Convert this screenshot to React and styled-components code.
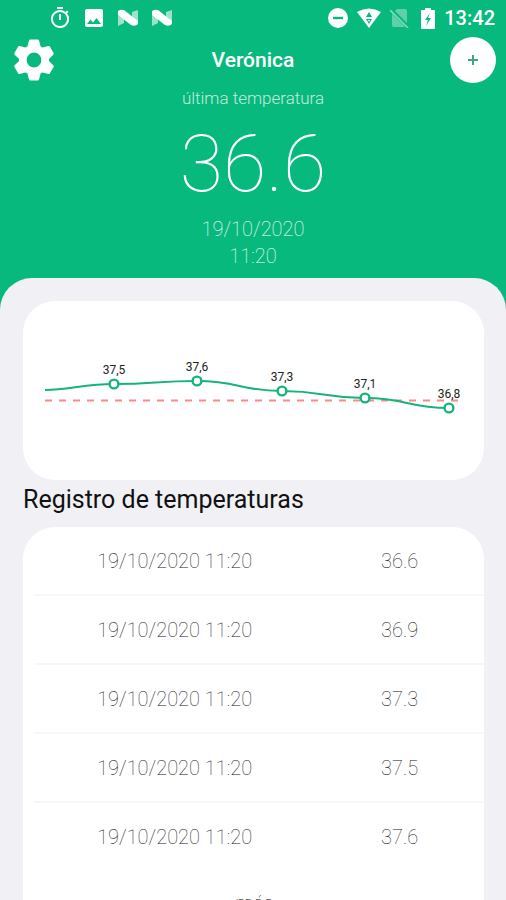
import React from "react";
import styled, { createGlobalStyle } from "styled-components";
import { MdOutlineTimer, MdImage } from "react-icons/md";

const GlobalStyle = createGlobalStyle`
    * {
        box-sizing: border-box;
    }
    body {
        margin: 0;
        background-color: #f0f0f5;
        font-family: Roboto, "Liberation Sans", sans-serif;
    }
`;

const Page = styled.div`
    display: flex;
    flex-direction: column;
    height: 100vh;
    background-color: #08b97e;
`;

const StatusBar = styled.div`
    display: flex;
    justify-content: space-between;
    align-items: center;
    height: 36px;
    padding: 0 11px 0 48px;
    color: white;
`;

const StatusGroup = styled.div`
    display: flex;
    align-items: center;
    gap: ${(props) => props.$gap}px;
`;

const Clock = styled.span`
    font-size: 20px;
    font-weight: 500;
`;

const Toolbar = styled.header`
    display: grid;
    grid-template-columns: 48px 1fr 48px;
    align-items: center;
    height: 48px;
    padding: 0 10px;
    color: white;
`;

const UserName = styled.h1`
    margin: 0;
    font-size: 21px;
    font-weight: 500;
    text-align: center;
`;

const SettingsBtn = styled.button`
    display: flex;
    justify-content: center;
    padding: 0;
    border: none;
    background: none;
    color: white;
`;

const AddBtn = styled.button`
    display: flex;
    justify-content: center;
    align-items: center;
    justify-self: end;
    width: 46px;
    height: 46px;
    padding: 0;
    border: none;
    border-radius: 50%;
    background-color: white;
`;

const LastReading = styled.section`
    padding-bottom: 8px;
    text-align: center;
    color: white;
`;

const Caption = styled.p`
    margin: 0;
    font-size: 17px;
    font-weight: 300;
    line-height: 28px;
    color: rgba(255, 255, 255, 0.75);
`;

const BigTemperature = styled.p`
    margin: 0;
    font-size: 79px;
    font-weight: 100;
    line-height: 104px;
`;

const LastDate = styled.p`
    margin: 0;
    font-size: 20px;
    font-weight: 100;
    line-height: 27px;
    color: white;
`;

const Sheet = styled.main`
    flex: 1;
    min-height: 0;
    padding: 23px 22px 0 23px;
    border-radius: 32px 32px 0 0;
    background-color: #f0f0f5;
    overflow-y: auto;
    scrollbar-width: none;
`;

const Card = styled.div`
    border-radius: 32px;
    background-color: white;
    overflow: hidden;
`;

const ListCard = styled(Card)`
    padding: 0 0 12px 11px;
`;

const ChartSvg = styled.svg`
    display: block;
    width: 100%;
    height: auto;
`;

const ChartLabel = styled.text`
    font-size: 12px;
    text-anchor: middle;
    fill: #222;
`;

const SectionTitle = styled.h2`
    margin: 0;
    padding-bottom: 8px;
    font-size: 25px;
    font-weight: 400;
    line-height: 39px;
    color: #111;
`;

const LogTable = styled.table`
    width: 100%;
    table-layout: fixed;
    border-spacing: 0;
`;

const LogCell = styled.td`
    width: ${(props) => props.$width};
    height: 69px;
    padding: 0;
    border-bottom: 2px solid ${(props) => (props.$last ? "transparent" : "#f7f7f8")};
    font-size: 20px;
    font-weight: 100;
    text-align: center;
    color: #222;
`;

const MoreBtn = styled.button`
    display: block;
    width: 100%;
    height: 62px;
    padding: 0 9px 0 0;
    border: none;
    background: none;
    font-family: inherit;
    font-size: 20px;
    font-weight: 100;
    color: #222;
`;

const points = [
    { x: 91, y: 83, label: "37,5" },
    { x: 174, y: 80, label: "37,6" },
    { x: 259, y: 90, label: "37,3" },
    { x: 342, y: 97, label: "37,1" },
    { x: 426, y: 107, label: "36,8" },
];

const records = [
    { id: 1, date: "19/10/2020 11:20", value: "36.6" },
    { id: 2, date: "19/10/2020 11:20", value: "36.9" },
    { id: 3, date: "19/10/2020 11:20", value: "37.3" },
    { id: 4, date: "19/10/2020 11:20", value: "37.5" },
    { id: 5, date: "19/10/2020 11:20", value: "37.6" },
];

// flat tangents at every reading, so the curve eases in and out
const curvePath = () => {
    let path = "M22 89 C45 89 62 83 91 83";
    for (let i = 1; i < points.length; i++) {
        const prev = points[i - 1];
        const next = points[i];
        const mid = (prev.x + next.x) / 2;
        path += ` C${mid} ${prev.y} ${mid} ${next.y} ${next.x} ${next.y}`;
    }
    return path;
};

function NougatIcon() {
    return (
        <svg width="24" height="18" viewBox="0 0 24 18" fill="white">
            <path d="M2 2 L8 5 V14 L2 17 Z" opacity="0.6" />
            <path d="M16 3 L22 1 V15 L16 12 Z" opacity="0.6" />
            <path d="M2 2 Q5 0 8 1 L22 12 V15 Q19 18 15 16 L2 6 Z" />
        </svg>
    );
}

function DisturbIcon() {
    return (
        <svg width="20" height="20" viewBox="0 0 20 20">
            <circle cx="10" cy="10" r="10" fill="white" />
            <path d="M5 10 H15" stroke="#08b97e" strokeWidth="2.4" />
        </svg>
    );
}

function WifiIcon() {
    return (
        <svg width="24" height="20" viewBox="0 0 24 20">
            <path d="M0 4 Q12 -3 24 4 L12 20 Z" fill="white" />
            <path d="M12 4 L15 9 H9 Z M9 11 H15 L12 16 Z" fill="#08b97e" />
            <path d="M11 12 H13 L12 14 Z" fill="white" />
        </svg>
    );
}

function NoSimIcon() {
    return (
        <svg width="22" height="20" viewBox="0 0 22 20">
            <path d="M7 1 H15 Q17 1 17 3 V19 H4 Q2 19 2 17 V6 Z" fill="white" opacity="0.35" />
            <path d="M1 2 L18 19" stroke="#08b97e" strokeWidth="4" />
            <path d="M0 2 L18 20" stroke="#7fdcbb" strokeWidth="1.6" />
        </svg>
    );
}

function BatteryIcon() {
    return (
        <svg width="14" height="21" viewBox="0 0 14 21">
            <path d="M4 0 H10 V2 H13 Q14 2 14 3 V20 Q14 21 13 21 H1 Q0 21 0 20 V3 Q0 2 1 2 H4 Z" fill="white" />
            <path d="M9 5 L4 12 H7 L5 18 L10 10 H7 Z" fill="#08b97e" />
        </svg>
    );
}

function GearIcon() {
    return (
        <svg width="42" height="42" viewBox="-21 -21 42 42">
            <mask id="gearHole">
                <rect x="-21" y="-21" width="42" height="42" fill="white" />
                <circle r="7.4" fill="black" />
            </mask>
            <g fill="currentColor" mask="url(#gearHole)">
                <circle r="15" />
                {[0, 60, 120, 180, 240, 300].map((angle) => (
                    <path
                        key={angle}
                        d="M-7 -12 L-5 -19.4 Q-4.8 -20.4 -3.8 -20.4 H3.8 Q4.8 -20.4 5 -19.4 L7 -12 Z"
                        transform={`rotate(${angle})`}
                    />
                ))}
            </g>
        </svg>
    );
}

function Chart() {
    return (
        <ChartSvg viewBox="0 0 461 179" role="img" aria-label="Temperaturas">
            <path d="M22 99.5 H438" stroke="#fb8a84" strokeWidth="2" strokeDasharray="7 7" />
            <path d={curvePath()} fill="none" stroke="#16b37c" strokeWidth="2" />
            {points.map((point) => (
                <g key={point.label}>
                    <circle cx={point.x} cy={point.y} r="4.4" fill="white" stroke="#16b37c" strokeWidth="2.4" />
                    <ChartLabel x={point.x} y={point.y - 10}>{point.label}</ChartLabel>
                </g>
            ))}
        </ChartSvg>
    );
}

function App() {
    return (
        <Page>
            <GlobalStyle />
            <StatusBar>
                <StatusGroup $gap={10}>
                    <MdOutlineTimer size={24} />
                    <MdImage size={24} />
                    <NougatIcon />
                    <NougatIcon />
                </StatusGroup>
                <StatusGroup $gap={9}>
                    <DisturbIcon />
                    <WifiIcon />
                    <NoSimIcon />
                    <BatteryIcon />
                    <Clock>13:42</Clock>
                </StatusGroup>
            </StatusBar>
            <Toolbar>
                <SettingsBtn aria-label="Ajustes">
                    <GearIcon />
                </SettingsBtn>
                <UserName>Verónica</UserName>
                <AddBtn aria-label="Añadir">
                    <svg width="12" height="12" viewBox="0 0 12 12" stroke="#3fa780" strokeWidth="2">
                        <path d="M6 1 V11 M1 6 H11" />
                    </svg>
                </AddBtn>
            </Toolbar>
            <LastReading>
                <Caption>última temperatura</Caption>
                <BigTemperature>36.6</BigTemperature>
                <LastDate>
                    19/10/2020
                    <br />
                    11:20
                </LastDate>
            </LastReading>
            <Sheet>
                <Card>
                    <Chart />
                </Card>
                <SectionTitle>Registro de temperaturas</SectionTitle>
                <ListCard>
                    <LogTable>
                        <tbody>
                            {records.map((record, index) => (
                                <tr key={record.id}>
                                    <LogCell $width="62.5%" $last={index === records.length - 1}>{record.date}</LogCell>
                                    <LogCell $width="37.5%" $last={index === records.length - 1}>{record.value}</LogCell>
                                </tr>
                            ))}
                        </tbody>
                    </LogTable>
                    <MoreBtn>más</MoreBtn>
                </ListCard>
            </Sheet>
        </Page>
    );
}

export default App;
